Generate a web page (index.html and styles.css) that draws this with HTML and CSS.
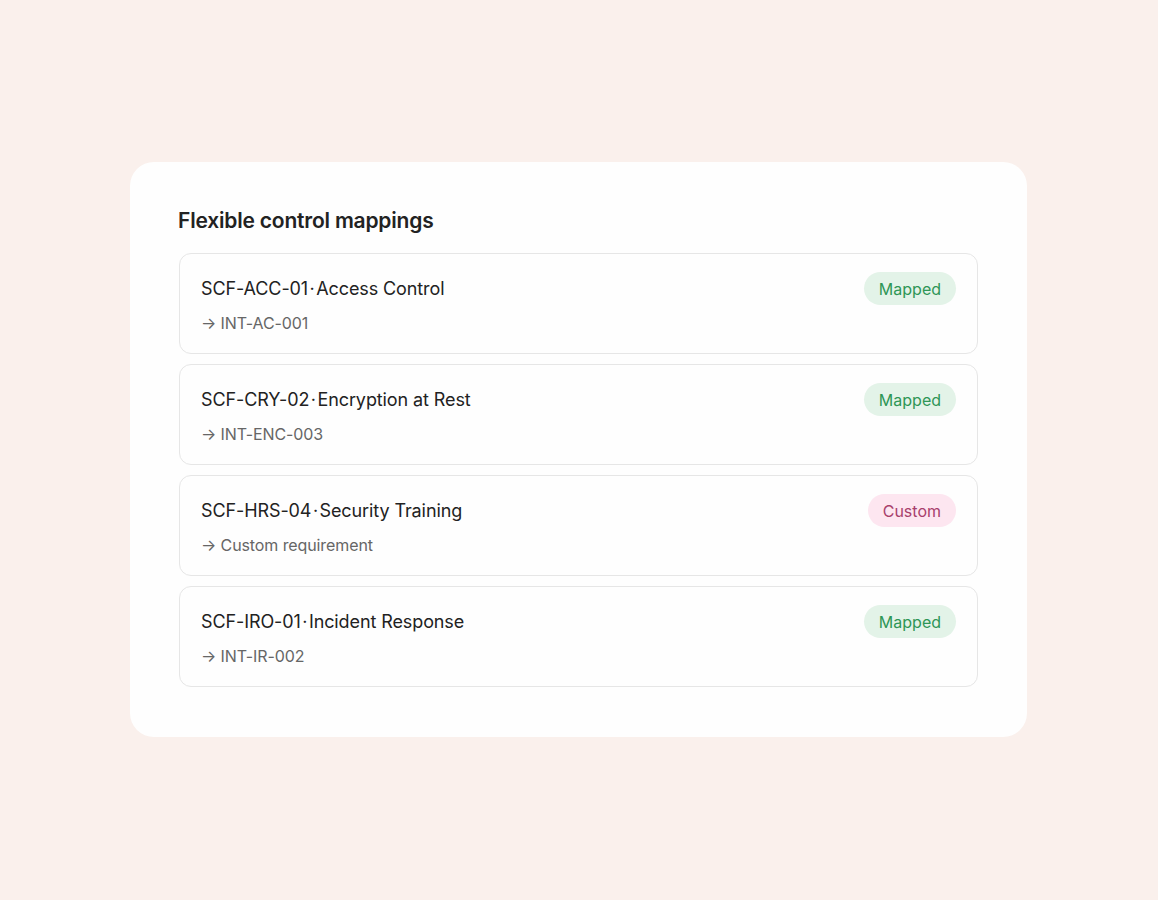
FILE: index.html
```html
<!DOCTYPE html>
<html lang="en">
<head>
<meta charset="utf-8">
<title>Flexible control mappings</title>
<link rel="stylesheet" href="styles.css">
</head>
<body>
<main class="stage">
  <section class="card">
    <h2 class="card-title">Flexible control mappings</h2>
    <ul class="rows">
      <li class="row">
        <div class="row-text">
          <div class="row-title">SCF-ACC-01&#8202;·&#8202;Access Control</div>
          <div class="row-sub">→ INT-AC-001</div>
        </div>
        <span class="badge badge-mapped">Mapped</span>
      </li>
      <li class="row">
        <div class="row-text">
          <div class="row-title">SCF-CRY-02&#8202;·&#8202;Encryption at Rest</div>
          <div class="row-sub">→ INT-ENC-003</div>
        </div>
        <span class="badge badge-mapped">Mapped</span>
      </li>
      <li class="row">
        <div class="row-text">
          <div class="row-title">SCF-HRS-04&#8202;·&#8202;Security Training</div>
          <div class="row-sub">→ Custom requirement</div>
        </div>
        <span class="badge badge-custom">Custom</span>
      </li>
      <li class="row">
        <div class="row-text">
          <div class="row-title">SCF-IRO-01&#8202;·&#8202;Incident Response</div>
          <div class="row-sub">→ INT-IR-002</div>
        </div>
        <span class="badge badge-mapped">Mapped</span>
      </li>
    </ul>
  </section>
</main>
</body>
</html>
```

FILE: styles.css
```css
* { box-sizing: border-box; }
html, body { margin: 0; padding: 0; }
body {
  background: #faf0ec;
  font-family: Inter, "Noto Sans", sans-serif;
  color: #1f1f1f;
}
.stage {
  width: 1158px;
  height: 900px;
  padding: 162px 131px 0 130px;
}
.card {
  background: #fefefe;
  border-radius: 24px;
  padding: 44px 48px 50px 48px;
  width: 897px;
}
.card-title {
  margin: 0 0 17px 0;
  font-size: 21px;
  line-height: 30px;
  font-weight: 600;
  letter-spacing: -0.2px;
  color: #222;
}
.rows {
  list-style: none;
  margin: 0;
  padding: 0 1px;
  display: flex;
  flex-direction: column;
  gap: 10px;
}
.row {
  height: 101px;
  border: 1px solid #e6e6e6;
  border-radius: 12px;
  padding: 0 21px 0 21px;
  display: flex;
  align-items: flex-start;
  justify-content: space-between;
}
.row-text {
  padding-top: 23px;
  display: flex;
  flex-direction: column;
  gap: 11px;
}
.row-title {
  font-size: 18px;
  line-height: 24px;
  font-weight: 400;
  color: #222;
  letter-spacing: -0.1px;
}
.row-sub {
  font-size: 16px;
  line-height: 22px;
  color: #666;
  letter-spacing: -0.1px;
}
.badge {
  margin-top: 18px;
  height: 33px;
  padding: 0 15px;
  border-radius: 17px;
  display: inline-flex;
  align-items: center;
  font-size: 16px;
  font-weight: 400;
}
.badge-mapped {
  background: #e3f3e8;
  color: #2e9656;
}
.badge-custom {
  background: #fde6f0;
  color: #a8406c;
}
```
